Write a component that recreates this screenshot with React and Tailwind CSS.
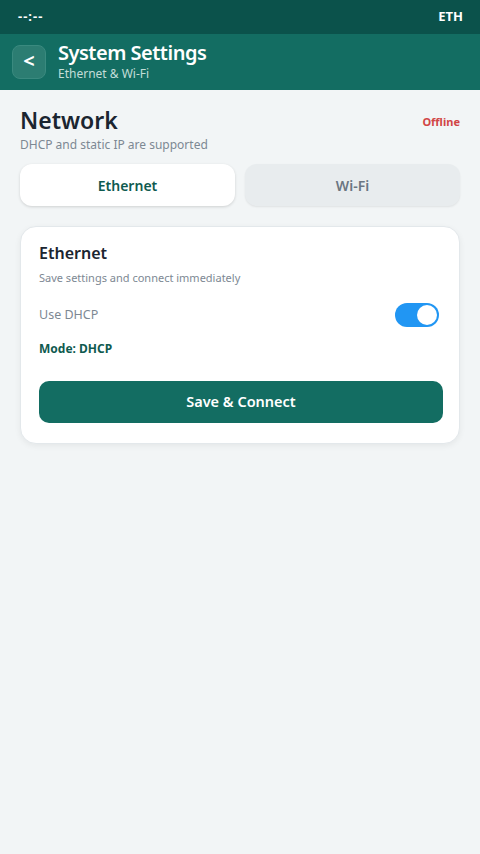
import React, { useState } from 'react';

const font = { fontFamily: '"Noto Sans", "Open Sans", sans-serif' };

const Tab = ({ label, active, onClick }) => (
  <button
    onClick={onClick}
    className={
      active
        ? 'flex-1 h-[42px] rounded-[12px] bg-white text-[14px] font-semibold text-[#0f5a4f] shadow-[0_1px_3px_rgba(0,0,0,0.15)]'
        : 'flex-1 h-[42px] rounded-[12px] bg-[#e8ecee] text-[14px] font-semibold text-[#6b7681] shadow-[0_1px_2px_rgba(0,0,0,0.08)]'
    }
  >
    {label}
  </button>
);

export default function App() {
  const [tab, setTab] = useState('eth');
  const [dhcp, setDhcp] = useState(true);

  return (
    <div style={font} className="min-h-[854px] w-[480px] bg-[#f2f5f6] flex flex-col">
      <div className="h-[34px] bg-[#0b524b] flex items-center justify-between px-[18px] text-white text-[13px] font-bold">
        <span className="tracking-[1px]">--:--</span>
        <span className="-mr-[1px]">ETH</span>
      </div>

      <div className="h-[56px] bg-[#136d62] flex items-center px-[12px] gap-[12px]">
        <button className="w-[34px] h-[34px] rounded-[8px] bg-[#2c7d72] border border-[#3a8a7f] text-white text-[20px] font-bold flex items-center justify-center leading-none pb-[2px]">
          &lt;
        </button>
        <div className="flex flex-col -mt-[2px]">
          <span className="text-white text-[20px] font-semibold leading-[26px] tracking-[-0.5px]">System Settings</span>
          <span className="text-[#c3ddd8] text-[12px] leading-[16px]">Ethernet &amp; Wi-Fi</span>
        </div>
      </div>

      <div className="px-[20px] pt-[14px]">
        <div className="flex items-start justify-between">
          <div className="flex flex-col">
            <span className="text-[23px] font-semibold text-[#1b2530] leading-[32px]">Network</span>
            <span className="text-[12px] text-[#7d8893] leading-[18px]">DHCP and static IP are supported</span>
          </div>
          <span className="text-[11px] font-bold text-[#d14545] mt-[10px]">Offline</span>
        </div>

        <div className="flex gap-[10px] mt-[10px]">
          <Tab label="Ethernet" active={tab === 'eth'} onClick={() => setTab('eth')} />
          <Tab label="Wi-Fi" active={tab === 'wifi'} onClick={() => setTab('wifi')} />
        </div>

        <div className="mt-[20px] bg-white rounded-[16px] border border-[#e3e8eb] shadow-[0_2px_6px_rgba(0,0,0,0.06)] pl-[18px] pr-[16px] pt-[12px] pb-[20px]">
          <div className="text-[16px] font-semibold text-[#1b2530] leading-[28px]">Ethernet</div>
          <div className="text-[11px] text-[#7d8893] leading-[16px] mt-[3px]">Save settings and connect immediately</div>

          <div className="flex items-center justify-between mt-[17px] pr-[4px]">
            <span className="text-[12.5px] text-[#7d8893]">Use DHCP</span>
            <button
              onClick={() => setDhcp(!dhcp)}
              className={
                dhcp
                  ? 'w-[44px] h-[24px] rounded-full bg-[#2196f3] flex items-center justify-end px-[2px]'
                  : 'w-[44px] h-[24px] rounded-full bg-[#c7ced4] flex items-center justify-start px-[2px]'
              }
            >
              <span className="w-[20px] h-[20px] rounded-full bg-white block" />
            </button>
          </div>

          <div className="text-[12px] font-bold text-[#0f5a4f] mt-[12px] leading-[20px]">Mode: DHCP</div>

          <button className="mt-[22px] w-full h-[42px] rounded-[10px] bg-[#136d62] text-white text-[14.5px] font-semibold">
            Save &amp; Connect
          </button>
        </div>
      </div>
    </div>
  );
}
